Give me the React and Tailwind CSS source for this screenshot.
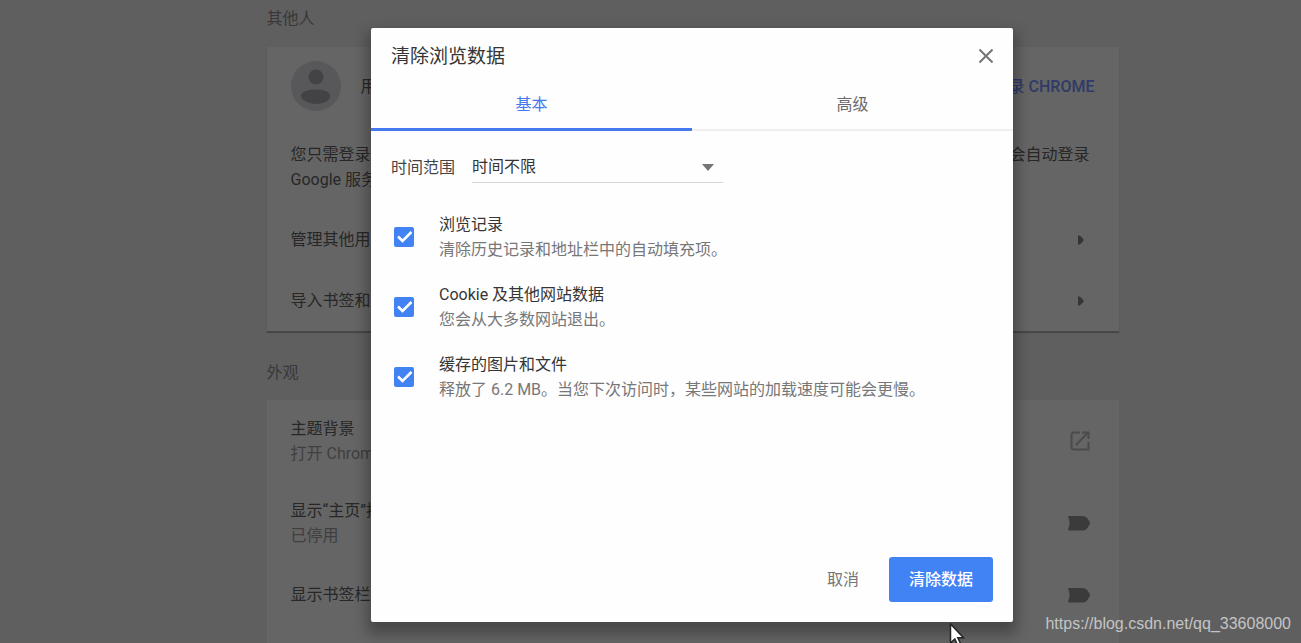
import { useState } from 'react';

const DATA_TYPES = [
  { id: 'history', title: '浏览记录', detail: '清除历史记录和地址栏中的自动填充项。' },
  { id: 'cookies', title: 'Cookie 及其他网站数据', detail: '您会从大多数网站退出。' },
  { id: 'cache', title: '缓存的图片和文件', detail: '释放了 6.2 MB。当您下次访问时，某些网站的加载速度可能会更慢。' },
];

function ArrowRow({ label }) {
  return (
    <button type="button" className="flex h-[61px] w-full items-center justify-between pl-6 pr-[35px] text-left">
      <span>{label}</span>
      <svg className="h-[10px] w-[6px]" viewBox="0 0 6 10" fill="#353535">
        <path d="M0 0l3 1.500 3 3.500-3 3.500L0 10z" />
      </svg>
    </button>
  );
}

function Toggle({ label }) {
  return (
    <button type="button" role="switch" aria-checked="false" aria-label={label} className="h-4 w-[22px]">
      <svg className="h-4 w-[22px]" viewBox="0 0 22 16" fill="#3b3b3b">
        <path d="M0 1h15.500q2.500.5 4 2.500l2 3q.8 1.500 0 3l-2 3.500q-1.200 2-4 2.500H1l-1-1q3-6.500 0-13z" />
      </svg>
    </button>
  );
}

function SettingRow({ title, detail, children }) {
  return (
    <div className={`flex items-center justify-between pl-6 pr-[29px] ${detail ? 'h-[82px]' : 'h-[61px]'}`}>
      <div>
        <p>{title}</p>
        {detail && <p className="text-[#3f3f3f]">{detail}</p>}
      </div>
      {children}
    </div>
  );
}

function SettingsPage() {
  return (
    <main className="ml-[84px] flex justify-center">
      <div className="w-[852px] pt-1.5 text-[#272727]">
        <h2 className="text-[#383838]">其他人</h2>
        <section className="mt-4 bg-[#656565] shadow-[0_2px_1px_#474747]">
          <div className="flex h-[78px] items-center px-6">
            <svg className="h-[50px] w-[50px]" viewBox="0 0 50 50">
              <circle cx="25" cy="25" r="25" fill="#58585b" />
              <circle cx="25" cy="16" r="7.500" fill="#434345" />
              <path d="M10 35c0-5 8-6.500 15-6.500s14 1.500 14 6.500-7 8-14 8-15-4-15-8z" fill="#434345" />
            </svg>
            <span className="ml-5 flex-1">用户</span>
            <button type="button" className="font-medium text-[#303a68]">登录 CHROME</button>
          </div>
          <div className="py-[17px] pl-6 pr-[29px]">
            <p className="flex justify-between">
              <span>您只需登录，</span>
              <span>会自动登录</span>
            </p>
            <p>Google 服务</p>
          </div>
          <ArrowRow label="管理其他用户" />
          <ArrowRow label="导入书签和设置" />
        </section>

        <h2 className="mt-[29px] text-[#383838]">外观</h2>
        <section className="mt-[15px] bg-[#656565]">
          <SettingRow title="主题背景" detail="打开 Chrome">
            <button type="button" aria-label="打开" className="h-5 w-5">
              <svg className="h-5 w-5" viewBox="0 0 20 20" fill="none" stroke="#4b4b4b" strokeWidth="2">
                <path d="M10 1.500H4Q1.500 1.500 1.500 4v12q0 2.500 2.500 2.500h14.500V11M6 14L17.500 2M12 1.500h6.500V8" />
              </svg>
            </button>
          </SettingRow>
          <SettingRow title="显示“主页”按钮" detail="已停用">
            <Toggle label="显示主页按钮" />
          </SettingRow>
          <SettingRow title="显示书签栏">
            <Toggle label="显示书签栏" />
          </SettingRow>
          <div className="h-[61px]" />
        </section>
      </div>
    </main>
  );
}

function DataTypeOption({ id, title, detail }) {
  return (
    <label htmlFor={id} className="flex items-center">
      <span className="relative ml-[3px] h-5 w-5">
        <input
          id={id}
          type="checkbox"
          defaultChecked
          className="peer block h-5 w-5 appearance-none rounded-xs border-2 border-[#757575] checked:border-0 checked:bg-[#4283f4]"
        />
        <svg
          className="pointer-events-none absolute inset-0 hidden h-5 w-5 peer-checked:block"
          viewBox="0 0 20 20"
          fill="none"
          stroke="#fff"
          strokeWidth="2.500"
        >
          <path d="M4 9.500l4.500 4.500L17.500 5" />
        </svg>
      </span>
      <span className="ml-[25px]">
        <span className="block text-[#353535]">{title}</span>
        <span className="block text-[#777]">{detail}</span>
      </span>
    </label>
  );
}

function ClearDataDialog() {
  const [tab, setTab] = useState('basic');
  const tabClass = (name) =>
    `h-[47px] flex-1 pb-1 ${
      tab === name
        ? 'border-b-3 border-[#4479f0] text-[#4479f0]'
        : 'border-b-2 border-[#efeff1] text-[#6b6b6b]'
    }`;

  return (
    <div
      role="dialog"
      aria-label="清除浏览数据"
      className="flex w-[642px] flex-col rounded-xs bg-[#fefeff] shadow-[0_8px_14px_4px_rgba(0,0,0,0.3)]"
    >
      <header className="flex h-14 items-center justify-between px-5">
        <h1 className="text-[19px] text-[#353535]">清除浏览数据</h1>
        <button type="button" aria-label="关闭">
          <svg className="h-[14px] w-[14px]" viewBox="0 0 14 14" stroke="#747474" strokeWidth="2">
            <path d="M.5.5l13 13M13.500.5l-13 13" />
          </svg>
        </button>
      </header>

      <div role="tablist" className="flex">
        <button type="button" role="tab" aria-selected={tab === 'basic'} className={tabClass('basic')} onClick={() => setTab('basic')}>
          基本
        </button>
        <button type="button" role="tab" aria-selected={tab === 'advanced'} className={tabClass('advanced')} onClick={() => setTab('advanced')}>
          高级
        </button>
      </div>

      <div className="flex-1 px-5 pt-5">
        <div className="flex items-center gap-[17px] text-[#454545]">
          <label htmlFor="period">时间范围</label>
          <div className="relative w-[251px]">
            <select id="period" className="block h-8 w-full appearance-none border-b border-[#d9d5d7] bg-transparent text-[#353535]">
              <option>时间不限</option>
              <option>过去一小时</option>
              <option>过去 24 小时</option>
              <option>过去 7 天</option>
              <option>过去 4 周</option>
            </select>
            <svg className="pointer-events-none absolute right-[9px] top-[13px] h-[7px] w-3" viewBox="0 0 12 7" fill="#757575">
              <path d="M0 0h12L6 7z" />
            </svg>
          </div>
        </div>

        <div className="mt-[29px] flex flex-col gap-5">
          {DATA_TYPES.map((item) => (
            <DataTypeOption key={item.id} {...item} />
          ))}
        </div>
      </div>

      <footer className="flex items-center justify-end gap-[30px] p-5">
        <button type="button" className="text-[#757575]">取消</button>
        <button type="button" className="h-[45px] rounded-[3px] bg-[#4182f4] px-5 font-medium text-white">
          清除数据
        </button>
      </footer>
    </div>
  );
}

export default function App() {
  return (
    <div className="relative h-screen overflow-hidden bg-[#5f5f60] font-[Roboto,'Noto_Sans_CJK_SC',sans-serif] text-base leading-[25px]">
      <SettingsPage />

      <div className="absolute inset-0 flex justify-center pb-[21px] pl-[83px] pt-7">
        <ClearDataDialog />
      </div>

      <svg className="absolute left-[949px] top-[623px] h-6 w-4" viewBox="0 0 16 24">
        <path d="M1.500 1v19l4.300-4 3 6.500 3-1.300-3-6.400h5.700z" fill="#fff" stroke="#222" strokeWidth="1.500" />
      </svg>
      <p className="absolute bottom-[7px] right-[10px] font-['Liberation_Sans',sans-serif] text-[#c4c4c4]">
        https://blog.csdn.net/qq_33608000
      </p>
    </div>
  );
}
